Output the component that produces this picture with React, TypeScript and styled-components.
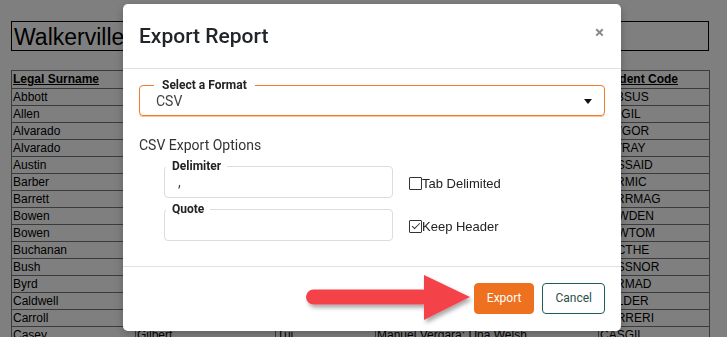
import * as React from 'react';
import styled, { createGlobalStyle } from 'styled-components';

const GlobalStyle = createGlobalStyle`
  html, body {
    margin: 0;
    padding: 0;
    background: #fff;
    overflow: hidden;
  }
`

interface Student {
  surname: string;
  given: string;
  preferred: string;
  teacher: string;
  code: string;
}

const students: Array<Student> = [
  { surname: 'Abbott', given: 'Susan', preferred: 'Sue', teacher: 'Manuel Vergara', code: 'ABBSUS' },
  { surname: 'Allen', given: 'Gilbert', preferred: 'Gil', teacher: 'Una Welsh', code: 'ALLGIL' },
  { surname: 'Alvarado', given: 'Gordon', preferred: 'Gord', teacher: 'Manuel Vergara', code: 'ALVGOR' },
  { surname: 'Alvarado', given: 'Ray', preferred: 'Ray', teacher: 'Una Welsh', code: 'ALVRAY' },
  { surname: 'Austin', given: 'Said', preferred: 'Said', teacher: 'Manuel Vergara', code: 'AUSSAID' },
  { surname: 'Barber', given: 'Michael', preferred: 'Mike', teacher: 'Una Welsh', code: 'BARMIC' },
  { surname: 'Barrett', given: 'Magnus', preferred: 'Mag', teacher: 'Manuel Vergara', code: 'BARRMAG' },
  { surname: 'Bowen', given: 'Denise', preferred: 'Den', teacher: 'Una Welsh', code: 'BOWDEN' },
  { surname: 'Bowen', given: 'Tomas', preferred: 'Tom', teacher: 'Manuel Vergara', code: 'BOWTOM' },
  { surname: 'Buchanan', given: 'Theo', preferred: 'Theo', teacher: 'Una Welsh', code: 'BUCTHE' },
  { surname: 'Bush', given: 'Nora', preferred: 'Nora', teacher: 'Manuel Vergara', code: 'BUSSNOR' },
  { surname: 'Byrd', given: 'Madeline', preferred: 'Maddy', teacher: 'Una Welsh', code: 'BYRMAD' },
  { surname: 'Caldwell', given: 'Derek', preferred: 'Del', teacher: 'Manuel Vergara', code: 'CALDER' },
  { surname: 'Carroll', given: 'Erica', preferred: 'Eri', teacher: 'Una Welsh', code: 'CARRERI' },
  { surname: 'Casey', given: 'Gilbert', preferred: 'Tui', teacher: 'Manuel Vergara; Una Welsh', code: 'CASGIL' },
]

/* ---------- report page behind the dialog ---------- */

const Page = styled.div`
  padding: 21px 18px 0 11px;
  font-family: "Liberation Sans", Arial, sans-serif;
  color: #000;
`

const ReportTitle = styled.div`
  border: 1px solid #000;
  height: 28px;
  padding: 0 2px;
  font-size: 23px;
  line-height: 30px;
  margin-bottom: 19px;
`

const Table = styled.table`
  width: 698px;
  border-collapse: collapse;
  table-layout: fixed;
  font-size: 12px;
`

const Cell = styled.td`
  border: 1px solid #777;
  padding: 0 1px;
  height: 16px;
  line-height: 15px;
  white-space: nowrap;
  overflow: hidden;
`

const HeadCell = styled(Cell).attrs({ as: 'th' })`
  height: 17px;
  line-height: 17px;
  text-align: left;
  font-weight: 700;
  text-decoration: underline;
`

/* ---------- dialog ---------- */

const Backdrop = styled.div`
  position: fixed;
  inset: 0;
  background: rgba(0, 0, 0, 0.5);
  display: flex;
  align-items: flex-start;
  padding: 4px 0 0 123px;
`

const Dialog = styled.div`
  position: relative;
  width: 498px;
  height: 327px;
  background: #fff;
  border-radius: 5px;
  box-shadow: 0 3px 10px rgba(0, 0, 0, 0.25);
  display: flex;
  flex-direction: column;
  font-family: Roboto, "Liberation Sans", sans-serif;
  color: #333;
`

const Header = styled.div`
  height: 64px;
  display: flex;
  align-items: center;
  justify-content: space-between;
  padding: 0 16px;
  border-bottom: 1px solid #dee2e6;
`

const Title = styled.h2`
  margin: 0;
  font-size: 21px;
  font-weight: 500;
  color: #212529;
`

const Close = styled.span`
  font-size: 17px;
  font-weight: 700;
  color: #8a8a8a;
  line-height: 1;
  margin-top: -8px;
  margin-right: 1px;
`

const Body = styled.div`
  flex: 1;
  padding: 9px 16px 0;
`

const Field = styled.fieldset<{ $focused?: boolean }>`
  margin: 0;
  padding: 0 0 0 ${props => props.$focused ? 14 : 1}px;
  border: 1px solid ${props => props.$focused ? '#ef7b2b' : '#dcdcdc'};
  border-radius: 4px;
  box-shadow: ${props => props.$focused ? '0 1px 0 rgba(239, 123, 43, 0.45)' : 'none'};
  min-width: 0;
`

const Legend = styled.legend<{ $focused?: boolean }>`
  padding: 0 ${props => props.$focused ? 8 : 6}px;
  font-size: 12px;
  font-weight: 700;
  color: #222;
  line-height: 14px;
`

const SelectValue = styled.div`
  display: flex;
  align-items: center;
  justify-content: space-between;
  height: 28px;
  padding: 0 12px 0 2px;
  margin-top: -5px;
  font-size: 14px;
  color: #444;
`

const Caret = styled.span`
  width: 0;
  height: 0;
  border-left: 4px solid transparent;
  border-right: 4px solid transparent;
  border-top: 5px solid #111;
`

const SectionTitle = styled.div`
  margin-top: 21px;
  font-size: 14px;
  color: #333;
`

const OptionRow = styled.div<{ $first?: boolean }>`
  display: flex;
  align-items: center;
  gap: 16px;
  padding-left: 25px;
  margin-top: ${props => props.$first ? 6 : 4}px;
`

const SmallField = styled(Field)`
  width: 229px;
  box-sizing: border-box;
`

const FieldValue = styled.div`
  height: 28px;
  margin-top: -4px;
  padding-left: 12px;
  font-size: 14px;
  line-height: 27px;
  color: #444;
`

const CheckLabel = styled.label`
  display: flex;
  align-items: center;
  font-family: "Liberation Sans", Arial, sans-serif;
  font-size: 13px;
  color: #222;
  margin-top: 10px;
`

const Check = styled.input`
  appearance: none;
  position: relative;
  box-sizing: border-box;
  margin: 0;
  width: 13px;
  height: 13px;
  border: 1px solid #333;
  border-radius: 1px;
  background: #fff;

  &:checked::after {
    content: '';
    position: absolute;
    left: 2px;
    top: 2px;
    width: 7px;
    height: 3px;
    border-left: 1.5px solid #333;
    border-bottom: 1.5px solid #333;
    transform: rotate(-45deg);
  }
`

const Footer = styled.div`
  position: relative;
  height: 64px;
  border-top: 1px solid #dee2e6;
  display: flex;
  align-items: center;
  justify-content: flex-end;
  gap: 8px;
  padding: 0 16px;
`

const Button = styled.button<{ $primary?: boolean }>`
  height: 31px;
  padding: 0 12px;
  border-radius: 4px;
  font-family: Roboto, "Liberation Sans", sans-serif;
  font-size: 12px;
  border: 1px solid ${props => props.$primary ? '#ee7120' : '#1e5e56'};
  background: ${props => props.$primary ? '#ee7120' : '#fff'};
  color: ${props => props.$primary ? '#fff' : '#2c4f4a'};
  margin-top: -2px;
`

const Arrow = styled.svg`
  position: absolute;
  left: 177px;
  top: 3px;
  overflow: visible;
`

const App = () => {
  return (
    <>
      <GlobalStyle />
      <Page>
        <ReportTitle>Walkerville Primary School</ReportTitle>
        <Table>
          <colgroup>
            <col style={{ width: 124 }} />
            <col style={{ width: 140 }} />
            <col style={{ width: 100 }} />
            <col style={{ width: 223 }} />
            <col style={{ width: 111 }} />
          </colgroup>
          <thead>
            <tr>
              <HeadCell>Legal Surname</HeadCell>
              <HeadCell>Legal Given Name</HeadCell>
              <HeadCell>Preferred</HeadCell>
              <HeadCell>Teachers</HeadCell>
              <HeadCell>Student Code</HeadCell>
            </tr>
          </thead>
          <tbody>
            {students.map((s, i) =>
              <tr key={i}>
                <Cell>{s.surname}</Cell>
                <Cell>{s.given}</Cell>
                <Cell>{s.preferred}</Cell>
                <Cell>{s.teacher}</Cell>
                <Cell>{s.code}</Cell>
              </tr>
            )}
          </tbody>
        </Table>
      </Page>

      <Backdrop>
        <Dialog>
          <Header>
            <Title>Export Report</Title>
            <Close>×</Close>
          </Header>
          <Body>
            <Field $focused>
              <Legend $focused>Select a Format</Legend>
              <SelectValue>
                CSV
                <Caret />
              </SelectValue>
            </Field>
            <SectionTitle>CSV Export Options</SectionTitle>
            <OptionRow $first>
              <SmallField>
                <Legend>Delimiter</Legend>
                <FieldValue>,</FieldValue>
              </SmallField>
              <CheckLabel>
                <Check type="checkbox" />
                Tab Delimited
              </CheckLabel>
            </OptionRow>
            <OptionRow>
              <SmallField>
                <Legend>Quote</Legend>
                <FieldValue></FieldValue>
              </SmallField>
              <CheckLabel>
                <Check type="checkbox" defaultChecked />
                Keep Header
              </CheckLabel>
            </OptionRow>
          </Body>
          <Footer>
            <Arrow width="172" height="50" viewBox="0 0 172 50">
              <defs>
                <filter id="arrowShadow" x="-10%" y="-20%" width="130%" height="160%">
                  <feDropShadow dx="2" dy="3" stdDeviation="2" floodColor="#000" floodOpacity="0.35" />
                </filter>
              </defs>
              <g filter="url(#arrowShadow)" fill="#f4434a">
                <rect x="6" y="19.5" width="124" height="15" rx="7.5" />
                <polygon points="124,5 170,27 124,50" />
              </g>
            </Arrow>
            <Button $primary>Export</Button>
            <Button>Cancel</Button>
          </Footer>
        </Dialog>
      </Backdrop>
    </>
  );
}

export default App
